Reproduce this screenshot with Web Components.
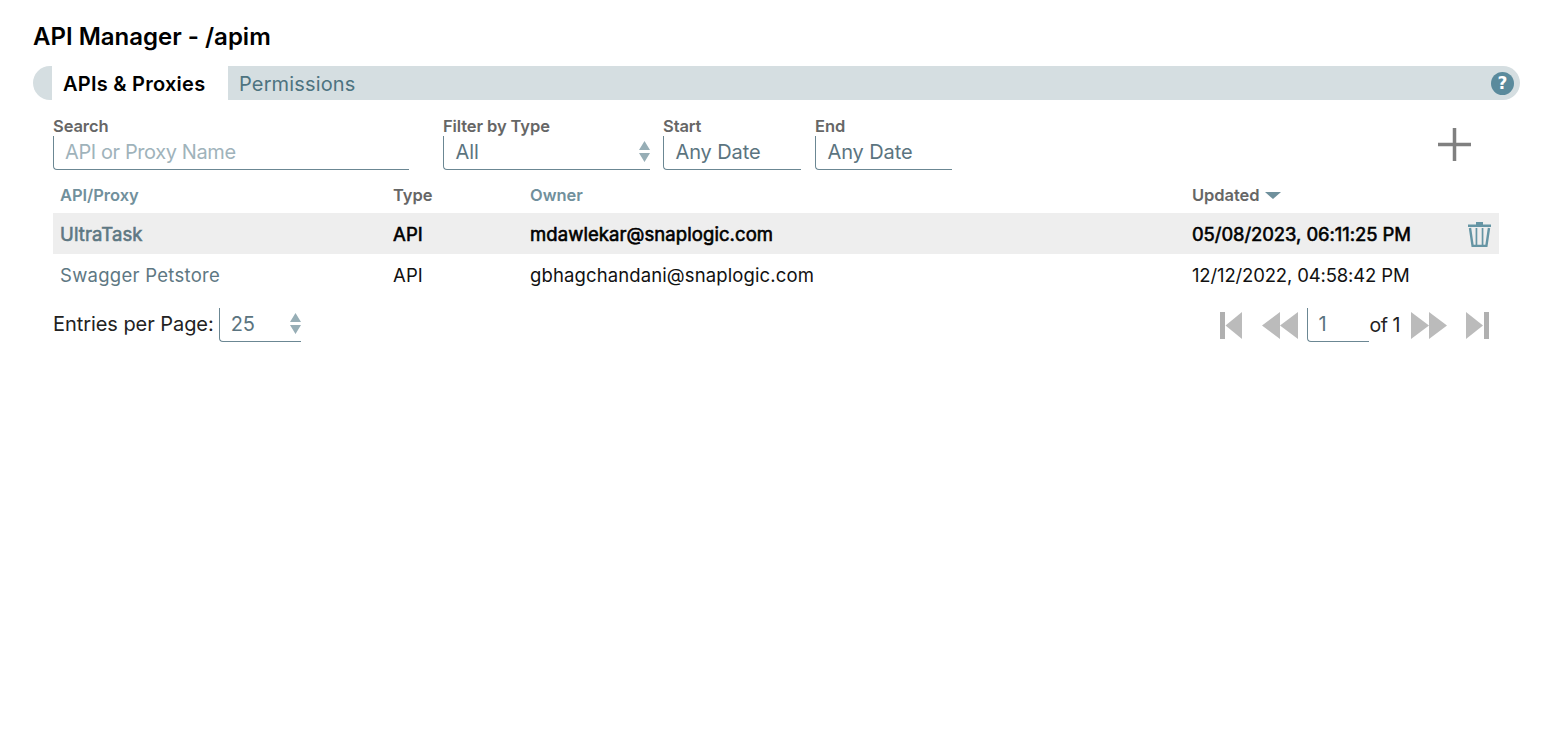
<!DOCTYPE html>
<html><head><meta charset="utf-8"><title>API Manager</title>
<style>html,body{margin:0;background:#fff;font-family:Inter,"Noto Sans",sans-serif;}</style></head>
<body>
<apim-page>
  <apim-tabs></apim-tabs>
  <apim-filters></apim-filters>
  <apim-table></apim-table>
  <apim-footer></apim-footer>
</apim-page>
<script>
function el(name, html){
  customElements.define(name, class extends HTMLElement{
    constructor(){super();this.attachShadow({mode:'open'}).innerHTML=html;}
  });
}
const updn=`<svg width="11" height="21" viewBox="0 0 11 21"><path d="M5.500 0L11 9H0Z M0 12H11L5.500 21Z" fill="#97aeb6"/></svg>`;
el('apim-page',`<style>
:host{display:block;width:1546px;height:754px;box-sizing:border-box;padding:20px 26px 0 33px;overflow:hidden}
h1{margin:0;font:600 24px/34px Inter,sans-serif;letter-spacing:0;color:#000;height:46px;white-space:nowrap}
</style><h1>API Manager - /apim</h1><slot></slot>`);
el('apim-tabs',`<style>
:host{display:flex;height:34px;background:#d5dee1;border-radius:17px;align-items:stretch;justify-content:flex-start;padding-left:19px;padding-right:6px}
.a{width:176px;background:#fff;display:flex;align-items:center;padding:2px 0 0 11px;font:600 20px Inter,sans-serif;letter-spacing:.25px;color:#000;box-sizing:border-box}
.b{flex:1;display:flex;align-items:center;padding:2px 0 0 11px;font:400 20px Inter,sans-serif;letter-spacing:.15px;color:#4d7380}
.h{align-self:center;width:23px;height:23px;border-radius:50%;background:#5a8a9c;color:#fff;font:700 17px/23px "DejaVu Sans",sans-serif;text-align:center}
</style><div class="a">APIs &amp; Proxies</div><div class="b">Permissions</div><div class="h">?</div>`);
el('apim-filter',`<style>
:host{display:block;box-sizing:border-box;color:#5b7480}
label{display:block;font:600 16.500px/19px Inter,sans-serif;letter-spacing:-.1px;color:#666;height:19px;white-space:nowrap}
.f{height:34px;box-sizing:border-box;border-left:1px solid #6b8793;border-bottom:1px solid #6b8793;border-bottom-left-radius:4px;display:flex;align-items:center;justify-content:space-between;padding:0 0 2px 11.500px;font:400 20px Inter,sans-serif;letter-spacing:-.1px;white-space:nowrap}
:host([ph]) .f{color:#9fb3bb;letter-spacing:-.4px;padding-left:11px}
svg{display:block}
</style><label><slot name="l"></slot></label><div class="f"><slot></slot></div>`);
el('apim-filters',`<style>
:host{display:flex;position:relative;height:87px;padding:17px 0 0 20px;box-sizing:border-box;align-items:flex-start}
apim-filter{flex:none}
.plus{margin-left:486px;margin-top:11px;width:33px;height:33px;flex:none}
</style>
<apim-filter ph style="width:356px;margin-right:34px"><span slot="l">Search</span>API or Proxy Name</apim-filter>
<apim-filter style="width:207px;margin-right:13px"><span slot="l">Filter by Type</span>All${updn}</apim-filter>
<apim-filter style="width:138px;margin-right:14px"><span slot="l">Start</span>Any Date</apim-filter>
<apim-filter style="width:137px"><span slot="l">End</span>Any Date</apim-filter>
<svg class="plus" viewBox="0 0 33 33"><path d="M0 14.750h33v3.500H0Z M14.750 0h3.500v33h-3.500Z" fill="#808080"/></svg>`);
el('apim-table',`<style>
:host{display:block;margin:-3px 21px 0 20px;font:400 18.500px Inter,sans-serif;letter-spacing:.12px}
.r{display:grid;grid-template-columns:340px 137px 662px 1fr 40px;align-items:center}
.r>div{padding-left:7px;white-space:nowrap}
.r>div:nth-child(2),.r>div:nth-child(3),.r>div:nth-child(4){padding-left:0}
.h{height:22px;padding-bottom:7px;font:600 16.500px Inter,sans-serif;letter-spacing:-.05px;color:#666}
.h .n{color:#71909c}
.s{height:41px;background:#eee;color:#000;-webkit-text-stroke:.6px currentColor}
.s>div:nth-child(3){letter-spacing:.08px}
.s>div:nth-child(4){letter-spacing:-.06px}
.p{height:41px;color:#111}
.p>div:nth-child(4){letter-spacing:-.15px}
.p>div:nth-child(1){letter-spacing:.28px}
.n{color:#5e7883}
.h i{display:inline-block;border:8px solid transparent;border-top:7px solid #6f909c;border-bottom:0;margin-left:5px;vertical-align:2px}
svg{display:block;margin:2px 0 0 2px}
</style>
<div class="r h"><div class="n">API/Proxy</div><div>Type</div><div class="n">Owner</div><div>Updated<i></i></div><div></div></div>
<div class="r s"><div class="n">UltraTask</div><div>API</div><div>mdawlekar@snaplogic.com</div><div>05/08/2023, 06:11:25 PM</div><div>
<svg width="23" height="25" viewBox="0 0 23 25"><path d="M8 0h7v2.500h-7Z M0 2.500h23v2.600H0Z" fill="#6595a4"/><path d="M2 6l2.600 17.900h13.800L21 6" fill="none" stroke="#6595a4" stroke-width="2.400"/><path d="M7.600 6h1.700v17H7.600Z M13.700 6h1.700v17h-1.700Z" fill="#6595a4"/></svg></div></div>
<div class="r p"><div class="n">Swagger Petstore</div><div>API</div><div>gbhagchandani@snaplogic.com</div><div>12/12/2022, 04:58:42 PM</div><div></div></div>`);
el('apim-footer',`<style>
:host{display:flex;align-items:flex-start;margin:13px 31px 0 20px;font:400 20px Inter,sans-serif;letter-spacing:-.06px;color:#222}
.t{line-height:32px}
.f{height:34px;box-sizing:border-box;border-left:1px solid #6b8793;border-bottom:1px solid #6b8793;border-bottom-left-radius:4px;display:flex;align-items:center;justify-content:space-between;color:#5b7480;font-size:20px;padding:0 0 2px 11px}
.e{width:82px;margin-left:5px}
.sp{flex:1}
.pg{display:flex;align-items:center;height:34px}
.n{width:62px;margin-left:9px;padding-left:10px}
.of{margin-right:10px;line-height:32px;font-size:19.500px;letter-spacing:-.45px}
.pg svg{display:block;flex:none}
</style>
<span class="t">Entries per Page:</span>
<div class="f e">25${updn}</div>
<div class="sp"></div>
<div class="pg">
<svg width="22" height="27" viewBox="0 0 22 27"><path d="M0 0h5v27H0Z" fill="#b0b0b0"/><path d="M22 0V27L5.500 13.500Z" fill="#bbb"/></svg>
<svg width="36" height="27" viewBox="0 0 36 27" fill="#bbb" style="margin-left:20px"><path d="M18 0V27L0 13.500Z M36 0V27L18 13.500Z"/></svg>
<div class="f n">1</div>
<span class="of">of 1</span>
<svg width="36" height="27" viewBox="0 0 36 27" fill="#bbb" style="margin-left:1px"><path d="M0 0V27L18 13.500Z M18 0V27L36 13.500Z"/></svg>
<svg width="23" height="27" viewBox="0 0 23 27" style="margin-left:19px"><path d="M0 0V27L17 13.500Z" fill="#bbb"/><path d="M18 0h5v27h-5Z" fill="#b0b0b0"/></svg>
</div>`);
</script>
</body></html>
